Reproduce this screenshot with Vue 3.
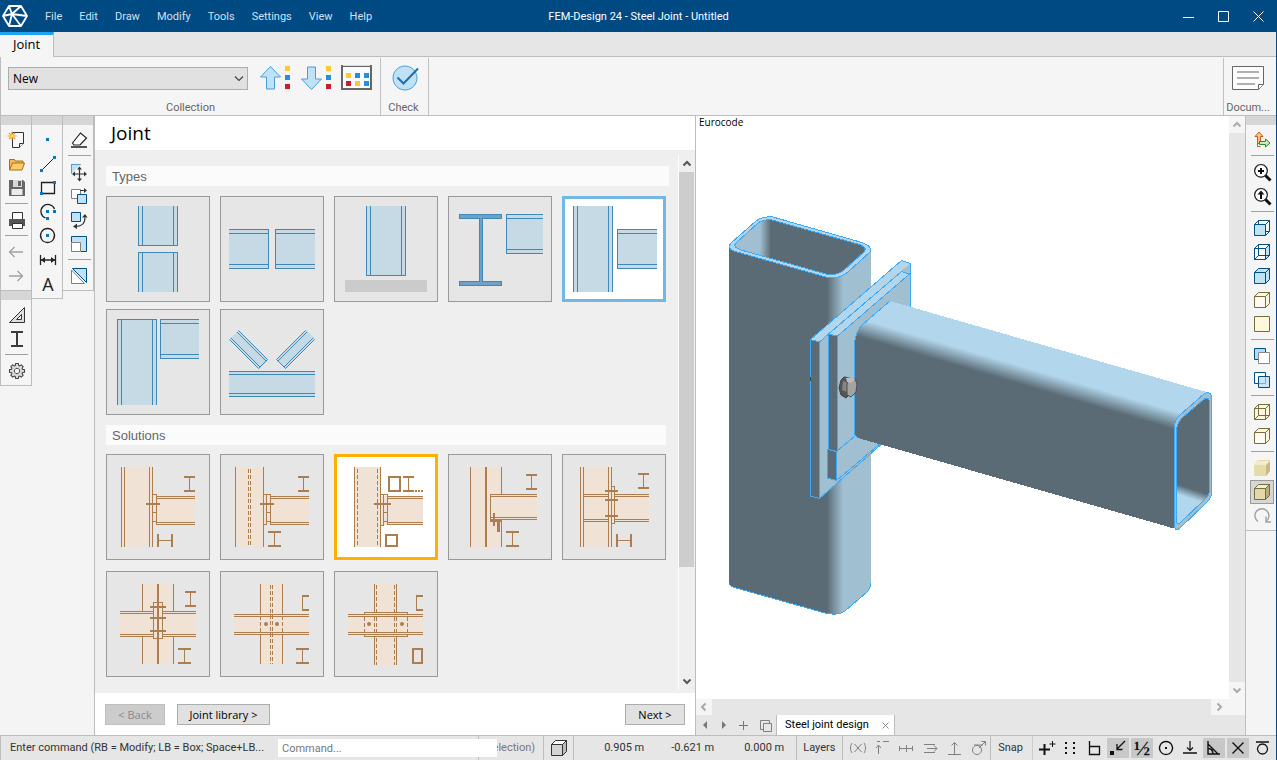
<script setup>
import { h, ref } from 'vue'

const Ico = (p) =>
  h(
    'svg',
    { width: p.w || 24, height: p.t || 24, viewBox: `0 0 ${p.w || 24} ${p.t || 24}`, 'aria-hidden': 'true' },
    p.d.map(([d, fill, stroke, sw]) =>
      h('path', { d, fill: fill || 'none', stroke: stroke || 'none', 'stroke-width': sw || 1 })
    )
  )
Ico.props = ['d', 'w', 't']

const menus = ['File', 'Edit', 'Draw', 'Modify', 'Tools', 'Settings', 'View', 'Help']
const K = '#333'
const B = '#0078c0'
const N = '#004f80'
const L = '#c0e2f5'
const G = '#808080'
const O = '#766c42'
const C = '#fff8dc'

const sq = (x, y) => `M${x} ${y}h3v3h-3z`
const front = 'M4.5 8.5h11v11h-11z'
const top = 'M4.5 8.5l4-4h11l-4 4z'
const side = 'M15.5 8.5l4-4v11l-4 4z'
const back = 'M8.5 4.5v11h11M8.5 15.5l-4 4'

const fileTools = [
  { n: 'New', d: [['M8.5 4.5h11v11l-4 4h-7z', '#f8f8f8', K], ['M15.5 19.5v-4h4', '#fff', K], ['M8 3.500v8.500M3.500 8h9M5 5l6 6M11 5l-6 6', '', '#eb9b2d', 1.200], ['M6.500 6.500h3v3h-3z', '#ffe04a']] },
  { n: 'Open', d: [['M5.500 18V7.500h5l1 1.500h7.500v3', '#f6b755', '#a8701c'], ['M5.500 18l3-7h12l-2.500 7z', '#ffcb6b', '#a8701c']] },
  { n: 'Save', d: [['M5 4h14l2 2v14h-16z', '#666'], ['M9 4h9v7h-9z', '#d8d8d8'], ['M14 5h3v5h-3z', '#666'], ['M7.500 13h11v6h-11z', '#ececec']] },
  null,
  { n: 'Print', d: [['M8.500 11V4.500h10V11', '#fff', K], ['M5 11h16v7h-16z', '#555'], ['M8.500 15.500h10v5h-10z', '#fff', K]] },
  null,
  { n: 'Undo', d: [['M19 12H5.500M10.500 7L5.500 12l5 5', '', '#a0a0a0', 1.3]] },
  { n: 'Redo', d: [['M5 12h13.500M13.500 7l5 5-5 5', '', '#a0a0a0', 1.3]] }
]
const modelTools = [
  { n: 'Plane', d: [['M5.500 19.500h15V4.500z', '#dedede', K], ['M12.500 16.500h5v-5z', '#f4f4f4', K]] },
  { n: 'Section', d: [['M7 5h12M7 19h12M13 5v14', '', '#3a3a3a', 2]] },
  null,
  { n: 'Options', d: [['M11.7 4.5H14.3L14.8 6.6 15.6 6.9 17.3 5.9 19.1 7.7 18.1 9.4 18.4 10.2 20.5 10.7V13.3L18.4 13.8 18.1 14.6 19.1 16.3 17.3 18.1 15.6 17.1 14.8 17.4 14.3 19.5H11.7L11.2 17.4 10.4 17.1 8.7 18.1 6.9 16.3 7.9 14.6 7.6 13.8 5.5 13.3V10.7L7.6 10.2 7.9 9.4 6.9 7.7 8.7 5.9 10.4 6.9 11.2 6.6z', '#dcdcdc', '#444', 1.1], ['M13 9.3a2.700 2.700 0 1 0 .01 0z', '#f4f4f4', '#444']] }
]
const drawTools = [
  { n: 'Point', d: [[sq(10, 10), B]] },
  { n: 'Line', d: [['M5.500 18.500l13-13', '', '#222'], [sq(4, 17) + sq(17, 4), B]] },
  { n: 'Rectangle', d: [['M5.500 6.500h13v11h-13z', '', '#222', 1.3], [sq(4, 16) + sq(17, 5), B]] },
  { n: 'Arc', d: [['M18.500 9a7 7 0 1 0-9 9', '', '#222', 1.3], [sq(10, 10) + sq(17, 10) + sq(10, 17), B]] },
  { n: 'Circle', d: [['M11.500 4.500a7 7 0 1 0 .01 0z', '', '#222', 1.3], [sq(10, 10), B]] },
  { n: 'Dimension', d: [['M4.500 7v10M19.500 7v10M5 12h14', '', '#222', 1.300], ['M5 12l4-3v6zM19 12l-4-3v6z', '#222']] },
  { n: 'Text', text: 'A' }
]
const editTools = [
  { n: 'Erase', d: [['M5.500 15l8-10 6 5-6.500 7h-6z', '#fff', '#222', 1.2], ['M4 18h16v2h-16z', '#555']] },
  null,
  { n: 'Move', d: [['M4.500 13.500v-9h9', L, N], ['M4.500 4.500h9l-9 9z', L], ['M12.500 8v12M6.500 14h12', '', K, 1.200], ['M12.500 6.500l-2.500 3h5zM12.500 21.500l-2.500-3h5zM5 14l3-2.500v5zM20 14l-3-2.500v5z', K]] },
  { n: 'Copy', d: [['M4.500 5.500h9v9h-9z', '#fff', G], ['M10.500 10.500h9v9h-9z', L, N], ['M13 6.500h5', '', K], ['M17 4l3 2.500-3 2.500z', K]] },
  { n: 'Rotate', d: [['M4.500 4.500h9v9h-9z', L, N], ['M9 18.500c4 0 9-2 9-9', '', K, 1.200], ['M15 9.500l3-3.500 2.500 3.500zM10 15.500l-4 3 4 2.500z', K]] },
  { n: 'Scale', d: [['M4.500 10V4.500h15v15H14', L, N], ['M4.500 10.500h9v9h-9z', '#fff', G]] },
  null,
  { n: 'Mirror', d: [['M5.500 4.500h14v14z', L, N], ['M4.500 6v13.500h13z', '#fff', G]] }
]
const viewTools = [
  { n: 'UCS', d: [['M7.500 15.500v-7h-2.500l4-4.500 4 4.500h-2.500v7z', '#ffc08a', '#c8591b'], ['M9.500 13.500h6v-2.500l4.500 4-4.500 4v-2.500h-6z', '#c5efb8', '#2a8a2f'], ['M7.500 15v3.500h3', '', '#c8591b']] },
  null,
  { n: 'Zoom in', d: [['M11 4.500a6.300 6.300 0 1 0 .01 0z', '#fff', '#222', 1.200], ['M11 8v6M8 11h6', '', '#111', 2], ['M15.500 15.500l5 5', '', '#111', 3]] },
  { n: 'Zoom previous', d: [['M11 4.500a6.300 6.300 0 1 0 .01 0z', '#fff', '#222', 1.200], ['M11 9v6', '', '#111', 2], ['M11 6.500l-3.500 4h7z', '#111'], ['M15.500 15.500l5 5', '', '#111', 3]] },
  null,
  { n: 'Front view', d: [[top, '#fff', N], [side, '#fff', N], ['M15.500 15.500h4M8.500 4.500v4', '', N], [front, L, N]] },
  { n: 'Side view', d: [[side, L, N], [front, '#fff', N], [top, '#fff', N], ['M4.500 19.500l4-4h7v4z', '#fff', N], [back, '', N], [side, '', N]] },
  { n: 'Solid view', d: [[front, L, N], [top, L, N], [side, L, N]] },
  { n: 'Top view', d: [[front, '#fffaf0', O], [top, C, O], [side, C, O]] },
  { n: 'Plane view', d: [['M4.500 4.500h15v15h-15z', C, O]] },
  null,
  { n: 'Bring front', d: [['M4.500 4.500h11v11h-11z', '#b5daf0', N], ['M8.500 8.500h11v11h-11z', '#fff', '#8a8a8a']] },
  { n: 'Overlap', d: [['M4.500 4.500h11v11h-11z', '#fff', N], ['M8.500 8.500h11v11h-11z', '#c8e6f8', N], ['M15.500 9v6.500h-6.500', '', '#7cb0cf']] },
  null,
  { n: 'Wireframe', d: [[front + top + side, C, O], [back, '', O]] },
  { n: 'Hidden line', d: [[front, '#fffaf0', O], [top, C, O], [side, C, O]] },
  null,
  { n: 'Shaded', d: [['M4 9l4-5h12v11l-4 5h-12z', '#e5dcac'], ['M16 9l4-5v11l-4 5z', '#c6bc83'], ['M4 9l4-4h12l-4 4z', '#f3edd0']] },
  { n: 'Shaded with edges', on: true, d: [[front, '#e2d9a8', O], [top, '#f3edd0', O], [side, '#b9ae75', O]] },
  { n: 'Refresh', d: [['M8 17.500a7 7 0 1 1 8.500-.5', '', '#a0a0a0', 1.400], ['M16 12.500v5.500h5', '', '#a0a0a0', 1.400]] }
]

const box = (x0, y0, x1, y1) => `M${x0} ${y0}H${x1}V${y1}H${x0}z`
const types = [
  { f: box(32, 10, 72, 50) + box(32, 56, 72, 96), s: 'M32.500 10v39.500h39v-39.500M36.500 10v40M67.500 10v40M32.500 96v-39.500h39v39.500M36.500 56v40M67.500 56v40' },
  { f: box(9, 33, 49, 73) + box(55, 33, 95, 73), s: 'M9 33.500h39.500v39h-39.500M9 37.500h40M9 68.500h40M95 33.500h-39.500v39h39.500M55 37.500h40M55 68.500h40' },
  { f: box(32, 10, 72, 80), g: box(11, 84, 93, 96), s: 'M32.500 10v69.500h39v-69.500M36.500 10v70M67.500 10v70' },
  { f: box(58, 18, 95, 58), i: 'M11.500 18.500h42v4h-19v63h19v4h-42v-4h20v-63h-20z', s: 'M95 18.500h-36.500v39h36.500M58 22.500h37M58 53.500h37' },
  { f: box(11, 10, 51, 96) + box(55, 33, 95, 73), s: 'M11.500 10v86M15.500 10v86M46.500 10v86M50.500 10v86M95 33.500h-39.500v39h39.500M55 37.500h40M55 68.500h40' },
  { f: box(11, 10, 51, 96) + box(54, 10, 93, 50), s: 'M11.500 96v-85.500h39v85.500M15.500 10v86M46.500 10v86M93 10.500h-38.500v39h38.500M54 14.500h39M54 45.500h39' },
  { f: box(9, 62, 95, 88) + 'M9 30l9-9 30 30-9 9zM95 30l-9-9-30 30 9 9z', s: 'M9 62.500h86M9 65.500h86M9 84.500h86M9 87.500h86', a: 'M9.500 30.500l29 29 9-9-29-29M11 29l29 29M17 23l29 29M94.500 30.500l-29 29-9-9 29-29M93 29l-29 29M87 23l-29 29' }
]

const iBeam = (x, y, w) => ({ t: `M${x} ${y + 1}h${w}M${x} ${y + 15}h${w}`, s: `M${x + Math.floor(w / 2) + 0.5} ${y + 2}v12` })
const hBeam = (x) => ({ t: `M${x + 1} 80v13M${x + 15} 80v13`, s: `M${x + 2} 86.500h12` })
const mk = (o, ...syms) => ({ ...o, s: o.s + syms.map((y) => y.s).join(''), t: (o.t || '') + syms.map((y) => y.t).join('') })
const solutions = [
  mk({ f: box(15, 13, 47, 93) + box(47, 42, 89, 71), s: 'M15.500 13v80M18.500 13v80M43.500 13v80M46.500 13v80M46.500 40.500h4v27h-4M46.500 58.500h4M89 42.500h-38.500v28h38.500M51 44.500h38M51 68.500h38', t: 'M40 50h14' }, iBeam(78, 22, 11), hBeam(51)),
  mk({ f: box(15, 13, 44, 93) + box(44, 42, 89, 71), s: 'M15.500 13v80M43.500 13v80M43.500 40.500h7v27h-4M43.500 70.500h3v-30M46.500 58.500h4M89 42.500h-38.500v28h38.500M51 44.500h38M51 68.500h38', d: 'M28.500 15v76M30.500 15v76', t: 'M40 50h14' }, iBeam(78, 22, 11), iBeam(48, 77, 13)),
  mk({ on: true, f: box(20, 13, 47, 93) + box(47, 42, 89, 71), s: 'M20.500 13v80M46.500 13v80M46.500 40.500h7v27h-4M46.500 71.500h3v-31M49.500 58.500h4M89 42.500h-35.500v28h35.500M54 44.500h35M54 68.500h35', d: 'M23.500 15v76M43.500 15v76', t: 'M40 50h17M55 23h11v14h-11zM52 81h11v11h-11zM81 37h2M84 37h2M87 37h2' }, iBeam(69, 22, 11)),
  mk({ f: box(22, 13, 54, 93) + box(42, 40, 89, 66), s: 'M22.500 13v80M53.500 13v27M53.500 67v26M89 40.500h-46.500v26M42 42.500h47M42 63.500h47M42 65.500h47', t: 'M38 13v80M46 59v13M42 67h12M50 66v12M51 66v12' }, iBeam(78, 20, 11), iBeam(58, 77, 13)),
  mk({ f: box(18, 13, 50, 93) + box(50, 40, 87, 68), s: 'M18.500 13v80M21.500 13v80M46.500 13v80M49.500 13v80M49.500 32.500h3v37h-3M22 40.500h25M22 42.500h25M22 65.500h25M22 67.500h25M53 40.500h34M53 42.500h34M53 65.500h34M53 67.500h34', t: 'M43 37h13M43 46h13M43 62h13' }, iBeam(76, 19, 11), hBeam(54)),
  mk({ f: box(36, 13, 68, 93) + box(14, 40, 90, 66), s: 'M36.500 13v27M36.500 66v27M67.500 13v27M67.500 66v27M14 40.500h33M14 42.500h33M14 63.500h33M14 65.500h33M57 40.500h33M57 42.500h33M57 63.500h33M57 65.500h33M47.500 31.500h9v36h-9z', t: 'M52 13v80M44 36h16M44 47h16M44 60h16' }, iBeam(79, 20, 11), iBeam(72, 77, 13)),
  mk({ f: box(40, 13, 63, 93) + box(14, 43, 89, 64), s: 'M40.500 13v30M40.500 64v29M62.500 13v30M62.500 64v29M14 43.500h75M14 45.500h75M14 61.500h75M14 63.500h75M82.500 24v16', d: 'M50.500 14v79M52.500 14v79M40.500 45v17M62.500 45v17', t: 'M82 25h7M82 39h7', dots: [46, 57] }, iBeam(76, 77, 13)),
  mk({ f: box(40, 13, 63, 94) + box(14, 43, 89, 64), s: 'M40.500 13v28M40.500 66v28M62.500 13v28M62.500 66v28M14 43.500h75M14 45.500h75M14 61.500h75M14 63.500h75M30.500 44v-2.500h43v2.500M30.500 63v2.500h43v-2.500M82.500 24v16', d: 'M42.500 14v27M60.500 14v27M42.500 67v27M60.500 67v27M30.500 46v16M40.500 46v16M42.500 46v16M60.500 46v16M62.500 46v16M73.500 46v16', t: 'M82 25h7M82 39h7M79 78h9v14h-9z', dots: [35, 68] })
]

const lockTools = [
  { n: 'Lock point', d: [['M6 7c-2 3-2 7 0 10M18 7c2 3 2 7 0 10M8.500 8l7 8M15.500 8l-7 8', '', G]] },
  { n: 'Lock axis', d: [['M8.500 18V10M6 12l2.500-3 2.500 3M7 5.500h3M13 5.500h6', '', G]] },
  { n: 'Midline', d: [['M5 12.500h14M5.500 10v5M18.500 10v5M12.500 9v7', '', G]] },
  { n: 'Parallel', d: [['M6 8.500h11M9 12.500h10M6 16.500h11M16 9.500l3 3-3 3', '', G]] },
  { n: 'Perpendicular', d: [['M6 18.500h13M12.500 18V7M9.500 9.500l3-3 3 3', '', G]] },
  { n: 'Tangent', d: [['M11 9.500a4.500 4.500 0 1 0 .01 0zM8 9h9M13 12l6-6M15.500 5.500h4v4', '', G]] }
]
const snapTools = [
  { n: 'Snap node', d: [['M10.500 8v11M5 13.500h11', '', '#111', 2], ['M18.500 5v6M15.500 8h6', '', '#111']] },
  { n: 'Snap grid', d: [['M7 6h2v2h-2zM15 6h2v2h-2zM7 11h2v2h-2zM15 11h2v2h-2zM7 16h2v2h-2zM15 16h2v2h-2z', '#111']] },
  { n: 'Snap corner', d: [['M7.500 5v13.500h10v-8h-10', '', '#111', 1.300]] },
  { n: 'Snap end', on: true, d: [['M4 15h4v4h-4z', '#111'], ['M19 5l-8 8M11 8v5.500h5.500', '', '#111', 1.300]] },
  { n: 'Snap middle', on: true, text: '½' },
  { n: 'Snap centre', d: [['M12 5.500a6.500 6.500 0 1 0 .01 0z', '', '#111', 1.300], ['M11 11h2v2h-2z', '#111']] },
  { n: 'Snap perpendicular', d: [['M5 17h14', '', '#111', 1.500], ['M12 5v9M9 11.500l3 3 3-3', '', '#111', 1.200]] },
  { n: 'Snap angle', on: true, d: [['M6 5v13h12M6 8l10 10M6 12.500c3 0 5 2 5 5.500', '', '#111', 1.400]] },
  { n: 'Snap intersection', on: true, d: [['M6.500 6.500l11 11M17.500 6.500l-11 11', '', '#111', 1.400]] },
  { n: 'Snap tangent', d: [['M6 6h13M12.500 8a5 5 0 1 0 .01 0z', '', '#111', 1.300]] }
]
const chev = {
  up: [['M4.500 9.500l3.500-3.500 3.500 3.500', '', '#555', 2]],
  down: [['M4.500 6.500l3.500 3.500 3.500-3.500', '', '#555', 2]],
  upL: [['M4.500 9.500l3.500-3.500 3.500 3.500', '', '#aaa', 2]],
  downL: [['M4.500 6.500l3.500 3.500 3.500-3.500', '', '#aaa', 2]],
  leftL: [['M9.500 4.500l-3.500 3.500 3.500 3.500', '', '#aaa', 2]],
  rightL: [['M6.500 4.500l3.500 3.500-3.500 3.500', '', '#aaa', 2]]
}
const arrowUp = [['M11.500 1.500l10 10.500h-6v12h-8v-12h-6z', '#bfe2f7', '#4a9fd8']]
const arrowDown = [['M11.500 24.500l10-10.500h-6v-12h-8v12h-6z', '#bfe2f7', '#4a9fd8']]
const dotsCol = [['M1 1h5v5h-5z', '#ffc92e'], ['M1 10h5v5h-5z', '#2590d8'], ['M1 19h5v5h-5z', '#c81f26']]
const libIcon = [['M1 1h29v23h-29z', '#f8fcff', '#666', 2], ['M2 .5h27', '', '#ddd', 1], ['M5 8h5v5h-5zM14 16h5v5h-5z', '#ffc92e'], ['M14 8h5v5h-5zM23 8h5v5h-5zM23 16h5v5h-5z', '#2590d8'], ['M5 16h5v5h-5z', '#c81f26']]
const checkIcon = [['M13 2a12 12 0 1 0 .01 0z', '#bfe2f7', '#4a9fd8'], ['M5.500 13.500l6 6L26 4.500', '', '#1f6fae', 2]]
const docIcon = [['M.5.500h31v18l-5 5h-26z', '#fdfdfd', '#666'], ['M26.500 23v-4.500h5', '#fff', '#666'], ['M5 6h22M5 12h22M5 18h18', '', '#b0b0b0', 2]]
const cubeIcon = [['M1.500 5.500h11v11h-11z', '#d4d4d4', '#333'], ['M1.500 5.500l4-4h11l-4 4z', '#fff', '#333'], ['M12.500 5.500l4-4v11l-4 4z', '#bbb', '#333']]
const tabCopy = [['M1.500 1.500h9v9h-9z', '', G], ['M4.500 4.500h8v8h-8z', '#e6e6e6', G]]
const minI = [['M0 6.500h11', '', '#fff']]
const maxI = [['M.5.500h10v10h-10z', '', '#fff']]
const closeI = [['M.5.500l10 10M10.500.500l-10 10', '', '#fff']]

const collection = ref('New')
const command = ref('')
</script>

<template>
  <div class="app">
    <header class="titlebar">
      <svg class="logo" width="26" height="24" viewBox="0 0 26 24" aria-hidden="true">
        <path d="M7 2h12l6 10-6 10H7L1 12zM10 10L7 2M10 10l9-8M10 10L1 12M10 10l15 2M10 10l9 12M10 10L7 22" fill="none" stroke="#fff" stroke-width="1.800" stroke-linejoin="round" />
      </svg>
      <nav class="menu"><button v-for="m in menus" :key="m">{{ m }}</button></nav>
      <h1 class="apptitle">FEM-Design 24 - Steel Joint - Untitled</h1>
      <div class="winbtns">
        <button aria-label="Minimize"><Ico :d="minI" :w="11" :t="11" /></button>
        <button aria-label="Maximize"><Ico :d="maxI" :w="11" :t="11" /></button>
        <button aria-label="Close"><Ico :d="closeI" :w="11" :t="11" /></button>
      </div>
    </header>

    <div class="frame">
      <div class="tabs"><button class="tab">Joint</button></div>

      <section class="ribbon">
        <div class="group coll">
          <div class="row">
            <div class="combo">
              <select v-model="collection" aria-label="Collection"><option>New</option></select>
              <svg class="arrow" width="10" height="6" viewBox="0 0 10 6" aria-hidden="true"><path d="M1 .5l4 4 4-4" fill="none" stroke="#444" stroke-width="1.200" /></svg>
            </div>
            <div class="bigs">
              <button class="big" aria-label="Move up"><Ico :d="arrowUp" :w="24" :t="26" /><Ico :d="dotsCol" :w="7" :t="26" /></button>
              <button class="big" aria-label="Move down"><Ico :d="arrowDown" :w="24" :t="26" /><Ico :d="dotsCol" :w="7" :t="26" /></button>
              <button class="big" aria-label="Library"><Ico :d="libIcon" :w="31" :t="26" /></button>
            </div>
          </div>
          <span class="cap">Collection</span>
        </div>
        <button class="group check"><Ico :d="checkIcon" :w="28" :t="27" /><span class="cap">Check</span></button>
        <button class="group docs"><Ico :d="docIcon" :w="32" :t="24" /><span class="cap">Docum...</span></button>
      </section>

      <main class="work">
        <div class="toolcols">
          <div class="tcol first">
            <div v-for="(set, k) in [fileTools, modelTools]" :key="k" class="tset">
              <i class="grip"></i>
              <div class="tl">
                <template v-for="(t, j) in set" :key="j">
                  <hr v-if="!t" /><button v-else :aria-label="t.n"><Ico :d="t.d" /></button>
                </template>
              </div>
            </div>
          </div>
          <div v-for="(set, k) in [drawTools, editTools]" :key="k" class="tcol">
            <div class="tset">
              <i class="grip"></i>
              <div class="tl">
                <template v-for="(t, j) in set" :key="j">
                  <hr v-if="!t" /><button v-else :aria-label="t.n"><Ico v-if="t.d" :d="t.d" /><span v-else class="letter">{{ t.text }}</span></button>
                </template>
              </div>
            </div>
          </div>
        </div>

        <section class="panel">
          <h2>Joint</h2>
          <div class="pbody">
            <div class="plist">
              <h3>Types</h3>
              <div class="tiles types">
                <button v-for="(t, k) in types" :key="k" class="tile" :class="{ selb: k === 4 }" :aria-label="'Type ' + (k + 1)">
                  <svg width="104" height="106" viewBox="0 0 104 106" aria-hidden="true">
                    <path v-if="t.g" class="base" :d="t.g" />
                    <path class="bf" :d="t.f" />
                    <path v-if="t.i" class="bi" :d="t.i" />
                    <path class="bs" :d="t.s" />
                    <path v-if="t.a" class="ba" :d="t.a" />
                  </svg>
                </button>
              </div>
              <h3 class="second">Solutions</h3>
              <div class="tiles sols">
                <button v-for="(t, k) in solutions" :key="k" class="tile" :class="{ selo: t.on }" :aria-label="'Solution ' + (k + 1)">
                  <svg width="104" height="106" viewBox="0 0 104 106" aria-hidden="true">
                    <path class="of" :d="t.f" />
                    <path class="os" :d="t.s" />
                    <path v-if="t.d" class="os dash" :d="t.d" />
                    <path class="ot" :d="t.t" />
                    <circle v-for="x in t.dots || []" :key="x" class="dot" :cx="x" cy="53" r="2" />
                  </svg>
                </button>
              </div>
            </div>
            <div class="pscroll">
              <button aria-label="Scroll up"><Ico :d="chev.up" :w="16" :t="16" /></button>
              <div class="track"><div class="thumb"></div></div>
              <button aria-label="Scroll down"><Ico :d="chev.down" :w="16" :t="16" /></button>
            </div>
          </div>
          <footer class="pfoot">
            <button class="btn" disabled>&lt; Back</button>
            <button class="btn lib">Joint library &gt;</button>
            <button class="btn next">Next &gt;</button>
          </footer>
        </section>

        <section class="view">
          <div class="vrow">
            <div class="canvas">
              <span class="code">Eurocode</span>
              <svg class="scene" viewBox="696 116 533 583" role="img" aria-label="Joint model">
                <defs>
                  <linearGradient id="gcol" gradientUnits="userSpaceOnUse" x1="827" y1="0" x2="843" y2="0"><stop offset="0" stop-color="#5b6b75" /><stop offset="1" stop-color="#a0bfd1" /></linearGradient>
                  <linearGradient id="gin" gradientUnits="userSpaceOnUse" x1="760" y1="0" x2="771" y2="0"><stop offset="0" stop-color="#a0bfd1" /><stop offset="1" stop-color="#5b6b75" /></linearGradient>
                  <linearGradient id="gbeam" gradientUnits="userSpaceOnUse" x1="950" y1="345" x2="945" y2="362"><stop offset="0" stop-color="#b2d7ed" /><stop offset="1" stop-color="#5b6b75" /></linearGradient>
                  <linearGradient id="gend" gradientUnits="userSpaceOnUse" x1="1177" y1="484" x2="1174" y2="493"><stop offset="0" stop-color="#5b6b75" /><stop offset="1" stop-color="#b2d7ed" /></linearGradient>
                </defs>
                <path d="M729 245V583Q730 587 736 588L825 613Q838 616 845 611L867 592Q871 588 871 584V248L826 270z" fill="url(#gcol)" />
                <path class="edge line" d="M729.500 583Q730 587 736 588L825 613Q838 616 845 611L867 592Q871 588 870.500 583" />
                <path class="edge" fill="#b2d7ed" d="M731 243L756 221Q762 216 773 217L860 242Q873 246 870 252L848 272Q838 280 826 277L737 252Q726 249 731 243z" />
                <path class="edge" fill="url(#gin)" d="M736 243L758 223Q763 219 772 220L858 244Q868 247 864 252L844 270Q837 276 826 274L741 250Q732 247 736 243z" />
                <path d="M810.500 339L901.500 260.500 910.500 263.500V310L882 444 819.500 498 810.500 496z" fill="#a0bfd1" />
                <path d="M810.500 339L901.500 260.500 910.500 263.500 819.500 342z" fill="#b2d7ed" />
                <path d="M901.500 271L910.500 263.500V274z" fill="#a0bfd1" />
                <path class="edge" fill="#b2d7ed" d="M828.500 334L901.500 271.500 909.500 274 837.500 336z" />
                <path class="edge" fill="#5b6b75" d="M810.500 339.500l9 2.500V498.500l-9-2.500z" />
                <path class="edge" fill="#5b6b75" d="M828.500 334.500l9 1.500V451.500l-9-2z" />
                <path class="edge" fill="#5b6b75" d="M827.500 449.500l9 2V480.500l-9-2.500z" />
                <path class="edge line" d="M810.500 339.500L901.500 260.500 910.500 263.500V308M819.500 342L828 334.500M836.500 451.500L855 436M836.500 480.500L882 442M819.500 498.500L884 442" />
                <path d="M854.500 435V345Q855 332 862 325L890 301 1210 393 1174 430V528.500L858 438z" fill="url(#gbeam)" />
                <path class="edge line" d="M858 438Q854.500 436 854.500 432V345Q855 332 862 325L890 301" />
                <path class="edge" fill="#a0bfd1" d="M1174.500 428Q1174 420 1180 415L1204 394Q1211 390 1211.500 398V493Q1211 499 1206 503L1180 528Q1175 532 1174.500 526z" />
                <path class="edge" fill="url(#gend)" d="M1176.500 431Q1177 423 1182 418L1203 400Q1208 396 1209.500 401V491Q1209 496 1204 500L1181 522Q1177 526 1176.500 521z" />
                <path d="M810 377h1v4h-1z" fill="#444" />
                <g class="bolt">
                  <path d="M844 377l7 1 1 14-6 6-5-3-2-7 2-8z" fill="#555" stroke="#444" />
                  <path d="M843 381l5 2-1 9-5-2z" fill="#858585" />
                  <path d="M849 378l6 1 2 5-1 8-5 5-4-2 0-11z" fill="#a3a3a3" stroke="#4c4c4c" />
                  <path d="M846 378l6-1 3 2-4 4-4-1z" fill="#bdbdbd" />
                </g>
              </svg>
            </div>
            <div class="vscroll">
              <button aria-label="Scroll up"><Ico :d="chev.upL" :w="16" :t="16" /></button>
              <div class="track"></div>
              <button aria-label="Scroll down"><Ico :d="chev.downL" :w="16" :t="16" /></button>
            </div>
          </div>
          <div class="hscroll">
            <button aria-label="Scroll left"><Ico :d="chev.leftL" :w="16" :t="16" /></button>
            <div class="track"></div>
            <button aria-label="Scroll right"><Ico :d="chev.rightL" :w="16" :t="16" /></button>
          </div>
          <div class="vtabs">
            <button aria-label="Previous"><Ico :d="[['M6 0v8l-4-4z', '#777']]" :w="8" :t="8" /></button>
            <button aria-label="Next"><Ico :d="[['M2 0v8l4-4z', '#777']]" :w="8" :t="8" /></button>
            <button aria-label="Add"><Ico :d="[['M0 4.500h9M4.500 0v9', '', '#777']]" :w="9" :t="9" /></button>
            <button aria-label="Duplicate"><Ico :d="tabCopy" :w="13" :t="13" /></button>
            <div class="vtab">Steel joint design<button aria-label="Close tab"><Ico :d="[['M.5.500l6 6M6.500.500l-6 6', '', '#888']]" :w="7" :t="7" /></button></div>
          </div>
        </section>

        <div class="rtools">
          <div class="tset">
            <i class="grip"></i>
            <div class="tl">
              <template v-for="(t, j) in viewTools" :key="j">
                <hr v-if="!t" /><button v-else :class="{ on: t.on }" :aria-label="t.n"><Ico :d="t.d" /></button>
              </template>
            </div>
          </div>
        </div>
      </main>

      <footer class="status">
        <div class="cell msg">
          <label for="cmd">Enter command (RB = Modify; LB = Box; Space+LB...</label>
          <input id="cmd" v-model="command" type="text" placeholder="Command..." />
        </div>
        <div class="cell sel">election)</div>
        <div class="cell cube"><Ico :d="cubeIcon" :w="18" :t="18" /></div>
        <div class="cell coords"><span>0.905 m</span><span>-0.621 m</span><span>0.000 m</span></div>
        <div class="cell lay">Layers</div>
        <div class="cell set"><button v-for="t in lockTools" :key="t.n" :aria-label="t.n"><Ico :d="t.d" /></button></div>
        <div class="cell snap">Snap</div>
        <div class="set snaps"><button v-for="t in snapTools" :key="t.n" :class="{ act: t.on }" :aria-label="t.n"><Ico v-if="t.d" :d="t.d" /><span v-else class="half">{{ t.text }}</span></button></div>
      </footer>
    </div>
  </div>
</template>

<style>
html, body { margin: 0; }
</style>

<style scoped>
* { box-sizing: border-box; }
.app { min-height: 100vh; display: flex; flex-direction: column; font: 11px/16px "Open Sans", "Noto Sans", sans-serif; color: #333; background: #f5f5f5; }
button { border: 0; background: none; padding: 0; margin: 0; font: inherit; color: inherit; }
svg { display: block; flex: none; }
h1, h2, h3 { margin: 0; font-weight: 400; }
.titlebar { height: 32px; background: #004a84; color: #fff; display: flex; align-items: center; position: relative; }
.logo { margin-left: 2px; }
.menu { display: flex; gap: 17px; margin-left: 17px; padding-top: 1px; color: #cfe0ef; font-family: Roboto, sans-serif; font-size: 11px; }
.apptitle { position: absolute; left: 0; right: 0; padding-top: 1px; text-align: center; font: 11px/16px Roboto, sans-serif; pointer-events: none; }
.winbtns { margin-left: auto; display: flex; gap: 24px; padding-right: 13px; }
.frame { flex: 1; display: flex; flex-direction: column; border-right: 1px solid #0a4678; }
.tabs { height: 25px; background: #e6e6e6; border-bottom: 1px solid #bdbdbd; display: flex; }
.tab { width: 54px; height: 25px; background: #f5f5f5; border-top: 3px solid #1ea2f2; border-right: 1px solid #bdbdbd; font: 13px/16px "Open Sans", sans-serif; color: #000; padding-bottom: 4px; }
.ribbon { height: 59px; border-bottom: 1px solid #bdbdbd; border-left: 1px solid #bdbdbd; display: flex; padding-top: 1px; }
.group { display: flex; flex-direction: column; align-items: center; justify-content: space-between; border-right: 1px solid #c0c0c0; padding-top: 7px; }
.cap { color: #666; line-height: 14px; font-family: Roboto, sans-serif; }
.coll { width: 380px; }
.row { display: flex; align-self: stretch; padding-left: 7px; align-items: center; }
.combo { position: relative; width: 240px; }
.combo select { width: 100%; height: 23px; appearance: none; background: #e1e1e1; border: 1px solid #adadad; border-radius: 0; padding: 0 4px; font: 12px "Open Sans", sans-serif; color: #000; display: block; }
.arrow { position: absolute; right: 4px; top: 9px; }
.bigs { display: flex; gap: 9px; margin-left: 11px; }
.big { display: flex; gap: 1px; }
.check { width: 48px; padding: 6px 0 0 2px; }
.check .cap { margin-right: 4px; }
.docs { margin-left: auto; width: 53px; border-right: 0; border-left: 1px solid #c0c0c0; padding: 8px 4px 0 0; }
.work { flex: 1; display: grid; grid-template-columns: 94px minmax(0, 602fr) minmax(0, 550fr) 30px; background: #f4f4f4; }
.toolcols { display: flex; align-items: flex-start; }
.tcol { width: 31px; }
.tcol.first { width: 32px; border-left: 1px solid #bdbdbd; }
.tset { border-right: 1px solid #bdbdbd; border-bottom: 1px solid #bdbdbd; background: #f5f5f5; }
.grip { display: block; height: 9px; background: #d6d6d6; }
.tl { padding: 3px 0 2px 2px; display: flex; flex-direction: column; align-items: center; }
.first .tl { padding-left: 0; }
.tl button { width: 24px; height: 24px; display: flex; align-items: center; justify-content: center; }
.tl hr { width: 23px; height: 1px; border: 0; background: #a0a0a0; margin: 3px 0 4px; }
.letter { font: 18px/24px "Open Sans", sans-serif; color: #222; }
.panel { background: #fff; border-left: 1px solid #bdbdbd; border-right: 1px solid #bdbdbd; display: flex; flex-direction: column; }
.panel h2 { height: 34px; padding-left: 16px; font: 19px/34px "Open Sans", sans-serif; color: #000; }
.pbody { flex: 1; background: #efefef; display: flex; padding: 5px 0 4px 11px; }
.plist { flex: 1; }
.plist h3 { height: 20px; margin: 11px 9px 10px 0; padding-left: 6px; background: #fbfbfb; color: #666; font: 13px/21px "Liberation Sans", sans-serif; }
.plist .second { margin: 10px 12px 9px 0; }
.tiles { display: flex; flex-wrap: wrap; column-gap: 10px; }
.types { row-gap: 7px; }
.sols { row-gap: 11px; }
.tile { width: 104px; height: 106px; background: #e6e6e6; box-shadow: inset 0 0 0 1px #999; }
.tile svg { shape-rendering: crispEdges; }
.selb { background: #fff; box-shadow: inset 0 0 0 3px #72b8e5; }
.selo { background: #fff; box-shadow: inset 0 0 0 3px #ffb000; }
.base { fill: #cbcbcb; }
.bf { fill: #c5dae5; }
.bi { fill: #6ea1c6; stroke: #4088b5; }
.bs, .ba { fill: none; stroke: #4088b5; }
.ba { shape-rendering: auto; }
.of { fill: #f0e3d6; }
.os { fill: none; stroke: #ab7d4f; }
.ot { fill: none; stroke: #ab7d4f; stroke-width: 2; }
.dash { stroke-dasharray: 4 2; }
.dot { fill: #ab7d4f; shape-rendering: auto; }
.pscroll { width: 17px; border-left: 1px solid #fff; display: flex; flex-direction: column; }
.pscroll button { height: 17px; display: flex; align-items: center; }
.pscroll .track { flex: 1; }
.pscroll .thumb { height: 79%; background: #cdcdcd; margin-right: 1px; }
.pfoot { height: 42px; display: flex; padding: 11px 10px 0; gap: 12px; }
.btn { height: 21px; background: #e1e1e1; border: 1px solid #adadad; width: 60px; font: 11px/16px "Open Sans", sans-serif; color: #000; }
.btn:disabled { background: #ccc; border-color: #bfbfbf; color: #888; }
.lib { width: 93px; }
.next { margin-left: auto; }
.view { background: #fff; display: flex; flex-direction: column; min-width: 0; border-right: 1px solid #bdbdbd; }
.vrow { flex: 1; display: flex; }
.canvas { flex: 1; position: relative; }
.code { position: absolute; left: 3px; top: -2px; color: #000; font-size: 10px; }
.scene { width: 100%; height: 100%; shape-rendering: crispEdges; }
.bolt { shape-rendering: auto; }
.edge { stroke: #3fa9f5; stroke-width: 1; }
.line { fill: none; }
.vscroll { width: 16px; display: flex; flex-direction: column; background: #f5f5f5; padding: 1px 0; }
.vscroll button, .hscroll button { width: 16px; height: 16px; }
.vscroll .track, .hscroll .track { flex: 1; background: #e6e6e6; }
.hscroll { display: flex; height: 16px; background: #f5f5f5; padding-right: 18px; }
.vtabs { height: 20px; background: #e6e6e6; display: flex; align-items: center; padding-left: 5px; gap: 11px; }
.vtab { margin-left: -7px; height: 20px; width: 119px; background: #fff; border-left: 1px solid #bdbdbd; border-right: 1px solid #bdbdbd; color: #000; font-family: Roboto, sans-serif; display: flex; align-items: center; justify-content: space-between; padding: 0 5px 0 8px; }
.rtools .tset { border-right: 0; }
.rtools .on { background: #d6d6d6; box-shadow: inset 0 0 0 1px #999; }
.status { height: 25px; border-top: 1px solid #bdbdbd; border-left: 1px solid #bdbdbd; background: #e6e6e6; display: flex; align-items: stretch; font-family: Roboto, sans-serif; line-height: 24px; white-space: nowrap; }
.cell { border-right: 1px solid #bdbdbd; }
.msg { width: 478px; display: flex; align-items: center; padding-left: 9px; }
.msg label { width: 268px; flex: none; }
.msg input { width: 219px; flex: none; height: 18px; border: 0; background: #fff; padding: 0 4px; font: 11px Roboto, sans-serif; position: relative; border-radius: 0; }
.msg input::placeholder { color: #777; opacity: 1; }
.sel { width: 67px; text-align: right; padding-right: 8px; color: #777; }
.cube { width: 31px; display: flex; align-items: center; justify-content: center; }
.coords { flex: 1; display: flex; justify-content: flex-end; padding-right: 12px; }
.coords span { width: 70px; text-align: right; }
.lay { padding: 0 6px; width: 47px; }
.set { display: flex; align-items: center; padding-left: 3px; }
.cell.set { width: 151px; }
.snaps { padding: 0 2px 0 1px; }
.set button { width: 24px; height: 20px; display: flex; align-items: center; justify-content: center; background-clip: content-box; padding: 0 1px; }
.set .act { background-color: #c8c8c8; }
.snap { width: 43px; padding-left: 7px; border-right-color: #ccc; }
.set .half { font: bold 22px/20px "Liberation Serif", serif; color: #111; }
</style>
